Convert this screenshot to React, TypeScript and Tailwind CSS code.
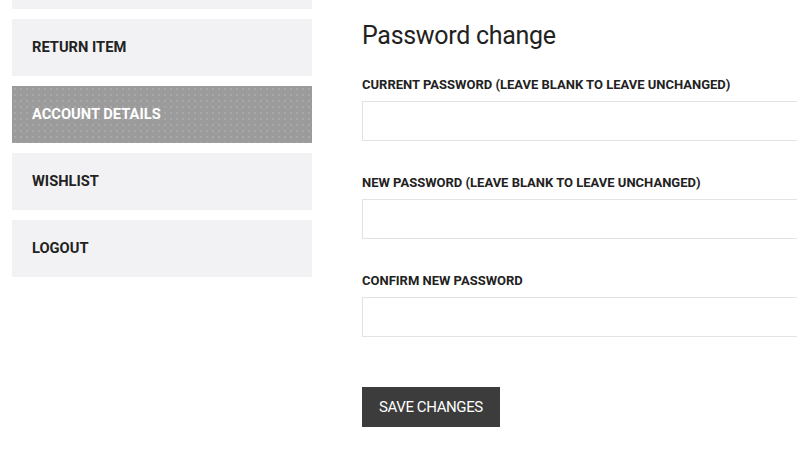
import React from 'react'

const menuItems = [
  { label: 'Orders', active: false },
  { label: 'Return item', active: false },
  { label: 'Account details', active: true },
  { label: 'Wishlist', active: false },
  { label: 'Logout', active: false },
]

const fields = [
  'Current password (leave blank to leave unchanged)',
  'New password (leave blank to leave unchanged)',
  'Confirm new password',
]

export default function App() {
  return (
    <div className="w-[797px] h-[454px] overflow-hidden bg-white font-['Roboto',sans-serif] text-[#222]">
      <div className="flex items-start gap-[50px] pl-3">
        {/* Sidebar */}
        <nav className="w-[300px] shrink-0 -mt-[48px] flex flex-col gap-[10px]">
          {menuItems.map((item) => (
            <a
              key={item.label}
              href="#"
              className={`h-[57px] flex items-center px-5 text-[14.7px] font-bold uppercase ${
                item.active
                  ? 'bg-[#9b9b9b] text-white bg-[radial-gradient(#a8a8a8_1px,transparent_1px)] bg-[length:6px_6px]'
                  : 'bg-[#f2f2f4] text-[#222]'
              }`}
            >
              {item.label}
            </a>
          ))}
        </nav>

        {/* Form */}
        <div className="w-[700px] shrink-0 pt-[19px]">
          <h2 className="text-[25px] leading-[34px] font-normal tracking-[-0.3px] text-[#222]">Password change</h2>
          <div className="mt-[24px] flex flex-col gap-[34px]">
            {fields.map((f) => (
              <div key={f}>
                <label className="block text-[13px] leading-[16px] font-bold uppercase mb-[8px]">{f}</label>
                <input type="password" className="block w-full h-[40px] border border-[#e3e3e3] bg-white outline-none" />
              </div>
            ))}
          </div>
          <button className="mt-[50px] h-[40px] px-[17px] bg-[#3c3c3c] text-white text-[15px] font-normal uppercase tracking-[-0.4px]">
            Save changes
          </button>
        </div>
      </div>
    </div>
  )
}
